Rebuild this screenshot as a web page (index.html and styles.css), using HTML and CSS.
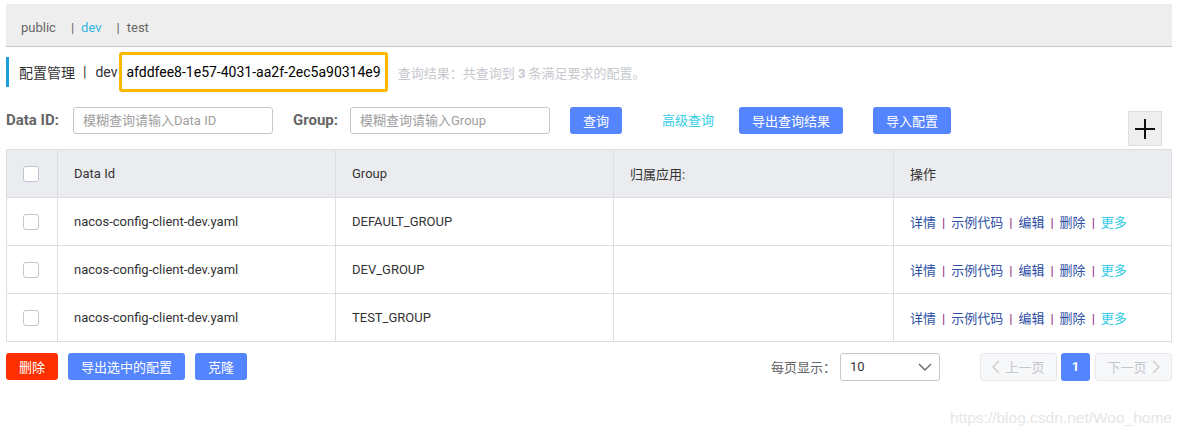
FILE: index.html
```html
<!DOCTYPE html>
<html lang="zh">
<head>
<meta charset="utf-8">
<link rel="stylesheet" href="styles.css">
</head>
<body>
<div class="page">
  <div class="ns-bar">
    <span class="ns">public</span>
    <span class="ns"><span class="sep">|</span><span class="active">dev</span></span>
    <span class="ns"><span class="sep">|</span>test</span>
  </div>

  <div class="title-row">
    <span class="title-mark"></span>
    <span class="title">配置管理</span>
    <span class="title-sep">|</span>
    <span class="title-ns">dev</span>
    <span class="ns-id">afddfee8-1e57-4031-aa2f-2ec5a90314e9</span>
    <span class="result">查询结果：共查询到 <b>3</b> 条满足要求的配置。</span>
  </div>

  <div class="search-row">
    <label class="lbl lbl-id">Data ID:</label>
    <input class="inp" placeholder="模糊查询请输入Data ID">
    <label class="lbl lbl-group">Group:</label>
    <input class="inp" placeholder="模糊查询请输入Group">
    <button class="btn btn-primary btn-query">查询</button>
    <a class="adv">高级查询</a>
    <button class="btn btn-primary btn-export">导出查询结果</button>
    <button class="btn btn-primary btn-import">导入配置</button>
    <button class="plus" aria-label="add">
      <svg width="22" height="22" viewBox="0 0 22 22"><path d="M11 1V21M1 11H21" stroke="#111" stroke-width="2" fill="none"/></svg>
    </button>
  </div>

  <table class="tbl">
    <colgroup>
      <col class="c-chk"><col class="c-id"><col class="c-grp"><col class="c-app"><col>
    </colgroup>
    <thead>
      <tr><th><span class="chk"></span></th><th>Data Id</th><th>Group</th><th>归属应用:</th><th>操作</th></tr>
    </thead>
    <tbody>
      <tr><td><span class="chk"></span></td><td>nacos-config-client-dev.yaml</td><td>DEFAULT_GROUP</td><td></td>
        <td class="ops"><a>详情</a><i>|</i><a>示例代码</a><i>|</i><a>编辑</a><i>|</i><a>删除</a><i>|</i><a class="more">更多</a></td></tr>
      <tr><td><span class="chk"></span></td><td>nacos-config-client-dev.yaml</td><td>DEV_GROUP</td><td></td>
        <td class="ops"><a>详情</a><i>|</i><a>示例代码</a><i>|</i><a>编辑</a><i>|</i><a>删除</a><i>|</i><a class="more">更多</a></td></tr>
      <tr><td><span class="chk"></span></td><td>nacos-config-client-dev.yaml</td><td>TEST_GROUP</td><td></td>
        <td class="ops"><a>详情</a><i>|</i><a>示例代码</a><i>|</i><a>编辑</a><i>|</i><a>删除</a><i>|</i><a class="more">更多</a></td></tr>
    </tbody>
  </table>

  <div class="foot-row">
    <button class="btn btn-danger btn-del">删除</button>
    <button class="btn btn-primary btn-exp-sel">导出选中的配置</button>
    <button class="btn btn-primary btn-clone">克隆</button>
    <span class="per-page">每页显示：</span>
    <div class="select"><span>10</span>
      <svg width="14" height="10" viewBox="0 0 14 10"><path d="M1 2L7 8L13 2" stroke="#666" stroke-width="1.4" fill="none"/></svg>
    </div>
    <button class="pg pg-prev" disabled>
      <svg width="8" height="14" viewBox="0 0 8 14"><path d="M7 1L1 7L7 13" stroke="#ccc" stroke-width="1.5" fill="none"/></svg>上一页</button>
    <button class="pg pg-cur">1</button>
    <button class="pg pg-next" disabled>下一页
      <svg width="8" height="14" viewBox="0 0 8 14"><path d="M1 1L7 7L1 13" stroke="#ccc" stroke-width="1.5" fill="none"/></svg></button>
  </div>

  <div class="watermark">https://blog.csdn.net/Woo_home</div>
</div>
</body>
</html>
```

FILE: styles.css
```css
* { box-sizing: border-box; }
body {
  margin: 0;
  background: #fff;
  font-family: Roboto, "Noto Sans CJK SC", sans-serif;
  font-size: 13px;
  color: #333;
}
.page { padding: 4px 10px 0 6px; }

.ns-bar {
  height: 43px;
  background: #eeeeee;
  border-bottom: 1px solid #c8c8c8;
  display: flex;
  align-items: center;
  padding-left: 15px;
  padding-top: 4px;
  font-size: 13px;
  color: #666;
}
.ns { margin-right: 15px; }
.ns .sep { margin-right: 7px; }
.ns .active { color: #33b5e5; }

.title-row {
  display: flex;
  align-items: center;
  height: 40px;
  margin-top: 5px;
  font-size: 14px;
  color: #333;
}
.title-mark {
  width: 3px;
  height: 30px;
  background: #1e9fd9;
  margin-right: 10px;
}
.title-sep { margin: 0 9px 0 8px; }
.title-ns { margin-right: 2px; }
.ns-id {
  height: 40px;
  border: 3px solid #fbb800;
  border-radius: 3px;
  padding: 0 4px 0 4px;
  display: flex;
  align-items: center;
  font-size: 14px;
  color: #000;
}
.result {
  margin-left: 10px;
  font-size: 13px;
  color: #c7c9ce;
}
.result b { color: #c7c9ce; }

.search-row {
  display: flex;
  align-items: flex-start;
  margin-top: 15px;
  height: 39px;
}
.lbl {
  font-weight: bold;
  font-size: 15px;
  color: #666;
  line-height: 27px;
}
.lbl-id { width: 67px; }
.lbl-group { width: 57px; margin-left: 20px; }
.inp {
  width: 200px;
  height: 27px;
  border: 1px solid #c4c6cf;
  border-radius: 3px;
  padding: 0 9px;
  font-family: inherit;
  font-size: 13px;
  color: #333;
}
.inp::placeholder { color: #a0a0a0; }

.btn {
  height: 27px;
  border: none;
  border-radius: 3px;
  color: #fff;
  font-family: inherit;
  font-size: 13px;
  padding: 0;
  cursor: pointer;
}
.btn-primary { background: #5584ff; }
.btn-danger { background: #ff3000; }
.btn-query { width: 52px; margin-left: 20px; }
.adv {
  color: #33cde5;
  line-height: 27px;
  margin-left: 40px;
  font-size: 13px;
}
.btn-export { width: 104px; margin-left: 25px; }
.btn-import { width: 78px; margin-left: 30px; }
.plus {
  margin-left: auto;
  margin-right: 10px;
  margin-top: 4px;
  width: 34px;
  height: 35px;
  background: #eeeeee;
  border: 1px solid #dddddd;
  padding: 0;
  display: flex;
  align-items: center;
  justify-content: center;
}

.tbl {
  width: 100%;
  border-collapse: collapse;
  table-layout: fixed;
  margin-top: 3px;
}
.c-chk { width: 51px; }
.c-id { width: 278px; }
.c-grp { width: 278px; }
.c-app { width: 280px; }
.tbl th, .tbl td {
  border: 1px solid #dcdee3;
  height: 48px;
  padding: 0 16px;
  text-align: left;
  font-weight: normal;
  font-size: 13px;
  color: #333;
  white-space: nowrap;
}
.tbl th { background: #ebecf0; }
.tbl th:first-child, .tbl td:first-child { padding: 0 0 0 16px; }
.chk {
  display: block;
  width: 16px;
  height: 16px;
  border: 1px solid #c4c6cf;
  border-radius: 3px;
  background: #fff;
}
.ops a { color: #2e4fa5; }
.ops a.more { color: #33cde5; }
.ops i { font-style: normal; color: #8a2a86; margin: 0 6px; }

.foot-row {
  display: flex;
  align-items: center;
  margin-top: 11px;
  height: 27px;
}
.btn-del { width: 52px; }
.btn-exp-sel { width: 117px; margin-left: 10px; }
.btn-clone { width: 52px; margin-left: 10px; }
.per-page { margin-left: auto; color: #666; font-size: 13px; margin-right: 4px; }
.select {
  width: 100px;
  height: 28px;
  border: 1px solid #c4c6cf;
  border-radius: 3px;
  display: flex;
  align-items: center;
  justify-content: space-between;
  padding: 0 7px 0 9px;
  margin-right: 40px;
  font-size: 13px;
  color: #333;
}
.pg {
  height: 28px;
  border-radius: 3px;
  font-family: inherit;
  font-size: 13px;
  padding: 0;
  display: flex;
  align-items: center;
  justify-content: center;
  gap: 5px;
}
.pg-prev, .pg-next {
  width: 77px;
  background: #f7f8fa;
  border: 1px solid #e6e7eb;
  color: #c4c6cf;
}
.pg-cur {
  width: 29px;
  margin: 0 5px 0 4px;
  background: #5584ff;
  border: none;
  color: #fff;
  font-weight: bold;
}

.watermark {
  text-align: right;
  margin-top: 29px;
  padding-right: 0;
  font-family: "Liberation Sans", sans-serif;
  font-size: 15.5px;
  color: #e6e6e6;
}
```
